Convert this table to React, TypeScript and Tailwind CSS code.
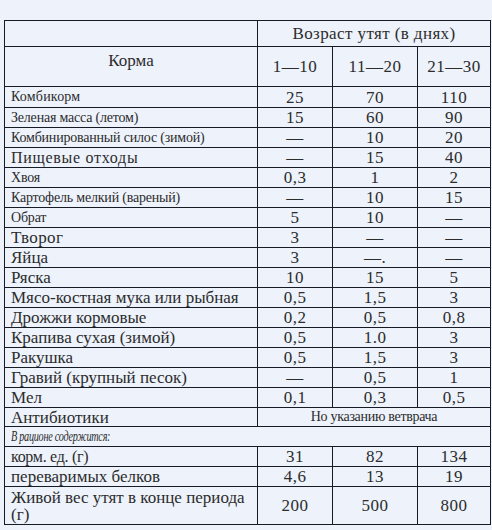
import React from "react";

type Row = {
  name: string;
  vals?: string[];
  span?: string;
  h: number;
  nameCls: string;
  valCls?: string;
  full?: boolean;
  squeeze?: boolean;
};

const N14 = "text-[14px] tracking-[-0.2px]";
const N17 = "text-[17px] tracking-[0px]";
const V17 = "text-[17px] tracking-[0.5px]";

const rows: Row[] = [
  { name: "Комбикорм", vals: ["25", "70", "110"], h: 21, nameCls: "text-[14px] tracking-[0.2px]", valCls: V17 },
  { name: "Зеленая масса (летом)", vals: ["15", "60", "90"], h: 20, nameCls: N14, valCls: V17 },
  { name: "Комбинированный силос (зимой)", vals: ["—", "10", "20"], h: 20, nameCls: N14, valCls: V17 },
  { name: "Пищевые отходы", vals: ["—", "15", "40"], h: 20, nameCls: "text-[16px] tracking-[0.7px]", valCls: V17 },
  { name: "Хвоя", vals: ["0,3", "1", "2"], h: 20, nameCls: N14, valCls: V17 },
  { name: "Картофель мелкий (вареный)", vals: ["—", "10", "15"], h: 20, nameCls: N14, valCls: V17 },
  { name: "Обрат", vals: ["5", "10", "—"], h: 20, nameCls: N14, valCls: V17 },
  { name: "Творог", vals: ["3", "—", "—"], h: 20, nameCls: "text-[17px] tracking-[0.4px]", valCls: V17 },
  { name: "Яйца", vals: ["3", "—.", "—"], h: 20, nameCls: N17, valCls: V17 },
  { name: "Ряска", vals: ["10", "15", "5"], h: 20, nameCls: N17, valCls: V17 },
  { name: "Мясо-костная мука или рыбная", vals: ["0,5", "1,5", "3"], h: 20, nameCls: N17, valCls: V17 },
  { name: "Дрожжи кормовые", vals: ["0,2", "0,5", "0,8"], h: 20, nameCls: N17, valCls: V17 },
  { name: "Крапива сухая (зимой)", vals: ["0,5", "1.0", "3"], h: 20, nameCls: N17, valCls: V17 },
  { name: "Ракушка", vals: ["0,5", "1,5", "3"], h: 20, nameCls: N17, valCls: V17 },
  { name: "Гравий (крупный песок)", vals: ["—", "0,5", "1"], h: 20, nameCls: N17, valCls: V17 },
  { name: "Мел", vals: ["0,1", "0,3", "0,5"], h: 20, nameCls: N17, valCls: V17 },
  { name: "Антибиотики", span: "Но указанию ветврача", h: 19, nameCls: N17 },
  { name: "В рационе содержится:", full: true, squeeze: true, h: 20, nameCls: "text-[15px] italic tracking-[-0.4px]" },
  { name: "корм. ед. (г)", vals: ["31", "82", "134"], h: 20, nameCls: "text-[16px] tracking-[-0.3px]", valCls: V17 },
  { name: "переваримых белков", vals: ["4,6", "13", "19"], h: 20, nameCls: N17, valCls: V17 },
  { name: "Живой вес утят в конце периода (г)", vals: ["200", "500", "800"], h: 38, nameCls: N17 + " leading-[19px]", valCls: V17 },
];

const ff = "font-['Liberation_Serif','DejaVu_Serif',serif]";
const bd = `border border-[#161b26] ${ff}`;

export default function App() {
  return (
    <div className={`w-[492px] h-[530px] bg-[#edf2fb] pt-[20px] pl-[4px] text-[#2c2c2c] overflow-hidden ${ff}`}>
      <table className={`table-fixed border-collapse w-[486px] text-[#2c2c2c] ${ff}`}>
        <colgroup>
          <col className="w-[253px]" />
          <col className="w-[75px]" />
          <col className="w-[85px]" />
          <col className="w-[73px]" />
        </colgroup>
        <tbody>
          <tr className="h-[26px]">
            <td className={bd}></td>
            <td colSpan={3} className={`${bd} text-center align-middle text-[17px] tracking-[0.4px] leading-none`}>
              Возраст утят (в днях)
            </td>
          </tr>
          <tr className="h-[40px]">
            <td className={`${bd} text-center align-top pt-[5px] text-[17px] leading-none`}>Корма</td>
            <td className={`${bd} text-center align-middle text-[17px] tracking-[0.5px] leading-none`}>1—10</td>
            <td className={`${bd} text-center align-middle text-[17px] tracking-[0.5px] leading-none`}>11—20</td>
            <td className={`${bd} text-center align-middle text-[17px] tracking-[0.5px] leading-none`}>21—30</td>
          </tr>
          {rows.map((r, i) => (
            <tr key={i} style={{ height: r.h }}>
              <td
                colSpan={r.full ? 4 : 1}
                className={`${bd} pl-[6px] pr-0 py-0 align-middle leading-none whitespace-normal ${r.nameCls}`}
              >
                {r.squeeze ? (
                  <span className="inline-block origin-left scale-x-[0.68] whitespace-nowrap">{r.name}</span>
                ) : (
                  r.name
                )}
              </td>
              {r.span && (
                <td colSpan={3} className={`${bd} text-center align-middle text-[14px] tracking-[-0.3px] leading-none`}>
                  {r.span}
                </td>
              )}
              {r.vals &&
                r.vals.map((v, j) => (
                  <td key={j} className={`${bd} p-0 text-center align-middle leading-none ${r.valCls}`}>
                    {v}
                  </td>
                ))}
            </tr>
          ))}
        </tbody>
      </table>
    </div>
  );
}
